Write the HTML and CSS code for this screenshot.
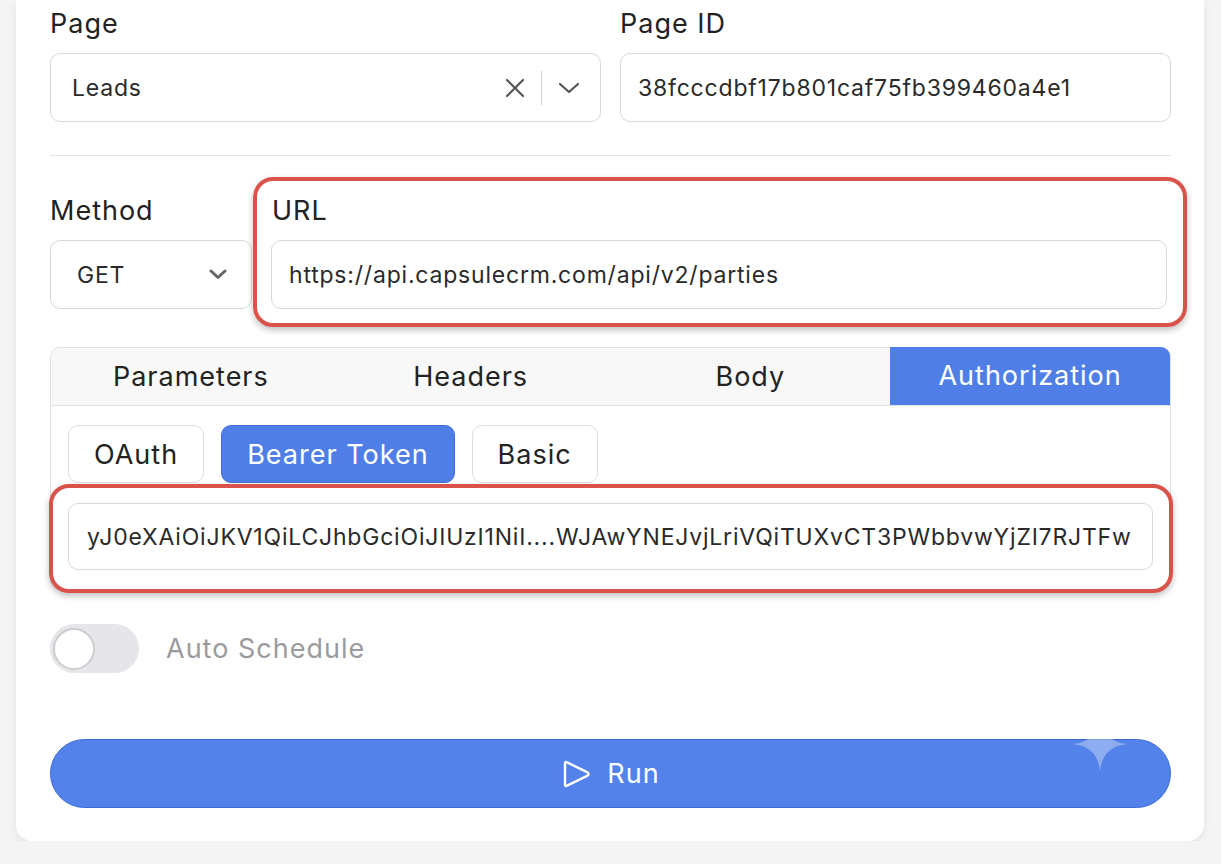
FILE: index.html
```html
<!doctype html>
<html>
<head>
<meta charset="utf-8">
<meta name="viewport" content="width=device-width, initial-scale=1.0">
<link rel="stylesheet" href="styles.css">
<title>Request settings</title>
</head>
<body>
<div class="card">

<div class="row two">
    <div class="field">
        <label class="label">Page</label>
        <div class="box select">
            <span class="value">Leads</span>
            <span class="controls">
                <svg class="clear" width="20" height="20" viewBox="0 0 20 20"><path d="M2 2 L18 18 M18 2 L2 18" stroke="#555" stroke-width="2.2" stroke-linecap="round" fill="none"/></svg>
                <span class="sep"></span>
                <svg class="chev" width="22" height="12" viewBox="0 0 22 12"><path d="M2 2 L11 10 L20 2" stroke="#555" stroke-width="2.2" stroke-linecap="round" stroke-linejoin="round" fill="none"/></svg>
            </span>
        </div>
    </div>
    <div class="field">
        <label class="label">Page ID</label>
        <div class="box"><span class="value">38fcccdbf17b801caf75fb399460a4e1</span></div>
    </div>
</div>

<hr class="rule">

<div class="row method-url">
    <div class="field">
        <label class="label">Method</label>
        <div class="box select method">
            <span class="value">GET</span>
            <svg class="chev small" width="18" height="11" viewBox="0 0 18 11"><path d="M2 2 L9 8.5 L16 2" stroke="#666" stroke-width="3" stroke-linecap="round" stroke-linejoin="round" fill="none"/></svg>
        </div>
    </div>
    <div class="field url">
        <span class="mark mark-url"></span>
        <label class="label">URL</label>
        <div class="box"><span class="value">https://api.capsulecrm.com/api/v2/parties</span></div>
    </div>
</div>

<div class="panel">
    <div class="tabs">
        <div class="tab">Parameters</div>
        <div class="tab">Headers</div>
        <div class="tab">Body</div>
        <div class="tab active">Authorization</div>
    </div>
    <div class="panel-body">
        <div class="auth-types">
            <div class="pill">OAuth</div>
            <div class="pill active">Bearer Token</div>
            <div class="pill">Basic</div>
        </div>
        <div class="token-wrap">
            <span class="mark mark-token"></span>
            <div class="box token"><span class="value">yJ0eXAiOiJKV1QiLCJhbGciOiJIUzI1NiI....WJAwYNEJvjLriVQiTUXvCT3PWbbvwYjZI7RJTFw</span></div>
        </div>
    </div>
</div>

<div class="schedule">
    <span class="toggle"><span class="knob"></span></span>
    <span class="schedule-text">Auto Schedule</span>
</div>

<button class="run">
    <svg class="play" width="30" height="30" viewBox="0 0 30 30"><path d="M4 4.6 Q4 2.3 6.1 3.4 L26.6 13.4 Q28.6 15 26.6 16.6 L6.1 26.6 Q4 27.7 4 25.4 Z" stroke="#fff" stroke-width="2.4" stroke-linejoin="round" fill="none"/></svg>
    <span>Run</span>
    <svg class="sparkle" width="56" height="56" viewBox="0 0 56 56"><path d="M28 0 Q30 26 56 28 Q30 30 28 56 Q26 30 0 28 Q26 26 28 0 Z" fill="rgba(255,255,255,0.35)"/></svg>
</button>

</div>
</body>
</html>
```

FILE: styles.css
```css
* {
    box-sizing: border-box;
}
body {
    margin: 0;
    background-color: #f4f4f5;
    font-family: Inter, "Noto Sans", Arial, sans-serif;
    color: #222;
}
.card {
    width: 1188px;
    margin-left: 16px;
    background: #fff;
    border-radius: 0 0 16px 16px;
    box-shadow: 0 3px 8px rgba(0, 0, 0, 0.08);
    padding: 8px 33px 33px 34px;
}
.row {
    display: grid;
    gap: 19px;
}
.row.two {
    grid-template-columns: 1fr 1fr;
}
.row.method-url {
    grid-template-columns: 202px 1fr;
}
.field {
    display: flex;
    flex-direction: column;
    gap: 13px;
}
.field.url {
    position: relative;
    margin-right: 4px;
}
.label {
    font-size: 27px;
    letter-spacing: 1px;
    line-height: 32px;
    color: #222;
}
.field.url .label {
    padding-left: 1px;
}
.box {
    height: 69px;
    border: 1.5px solid #d9d9dc;
    border-radius: 10px;
    background: #fff;
    display: flex;
    align-items: center;
    padding: 0 20px 0 17px;
    font-size: 23px;
    letter-spacing: 0.8px;
    color: #2a2a2a;
}
.box .value {
    flex: 1;
    white-space: nowrap;
    overflow: hidden;
}
.select .value {
    padding-left: 4px;
}
.controls {
    display: flex;
    align-items: center;
    gap: 16px;
}
.sep {
    width: 1.5px;
    height: 34px;
    background: #cfcfcf;
}
.method {
    padding: 0 24px 0 22px;
}
.method .value {
    padding-left: 4px;
}
.rule {
    border: 0;
    border-top: 1.5px solid #e3e3e5;
    margin: 33px 0 39px;
}
.mark {
    position: absolute;
    border: 4.5px solid #d9534a;
    border-radius: 20px;
    box-shadow: 0 3px 6px rgba(0, 0, 0, 0.25);
    pointer-events: none;
}
.mark-url {
    top: -18px;
    left: -18px;
    right: -20px;
    bottom: -18px;
}
.panel {
    margin-top: 38px;
    border: 1.5px solid #e2e2e4;
    border-radius: 10px;
}
.tabs {
    display: grid;
    grid-template-columns: repeat(4, 1fr);
    height: 58px;
    background: #f8f8f9;
    border-bottom: 1.5px solid #e2e2e4;
    border-radius: 9px 9px 0 0;
}
.tab {
    display: flex;
    align-items: center;
    justify-content: center;
    font-size: 27px;
    letter-spacing: 1px;
    color: #222;
}
.tab.active {
    background: #4f7fe6;
    color: #fff;
    border-radius: 0 9px 0 0;
    margin: -1.5px 0 0 0;
}
.panel-body {
    padding: 19px 17px 19px 17px;
}
.auth-types {
    display: flex;
    gap: 17px;
}
.pill {
    height: 58px;
    padding: 0 25px;
    border: 1.5px solid #dedee0;
    border-radius: 10px;
    display: flex;
    align-items: center;
    font-size: 27px;
    letter-spacing: 1px;
    color: #222;
}
.pill.active {
    background: #4f7fe6;
    border-color: #3f6fd8;
    color: #fff;
}
.token-wrap {
    position: relative;
    margin-top: 20px;
}
.box.token {
    height: 67px;
    padding: 0 14px 0 18px;
    letter-spacing: 0.8px;
}
.mark-token {
    top: -19px;
    left: -19px;
    right: -20px;
    bottom: -23px;
}
.schedule {
    display: flex;
    align-items: center;
    gap: 27px;
    margin-top: 34px;
}
.toggle {
    width: 89px;
    height: 49px;
    border-radius: 25px;
    background: #e6e6ea;
    display: flex;
    align-items: center;
    padding-left: 3px;
}
.knob {
    width: 42px;
    height: 42px;
    border-radius: 50%;
    background: #fff;
    border: 2px solid #cdcdd0;
}
.schedule-text {
    font-size: 27px;
    letter-spacing: 1px;
    color: #9b9b9e;
}
.run {
    position: relative;
    margin-top: 66px;
    width: 100%;
    height: 69px;
    border: 1px solid #3d6bd6;
    border-radius: 35px;
    background: #5282ea;
    color: #fff;
    font-family: inherit;
    font-size: 27px;
    letter-spacing: 1px;
    display: flex;
    align-items: center;
    justify-content: center;
    gap: 16px;
    padding: 0;
}
.run .sparkle {
    position: absolute;
    right: 42px;
    top: -24px;
}
```
